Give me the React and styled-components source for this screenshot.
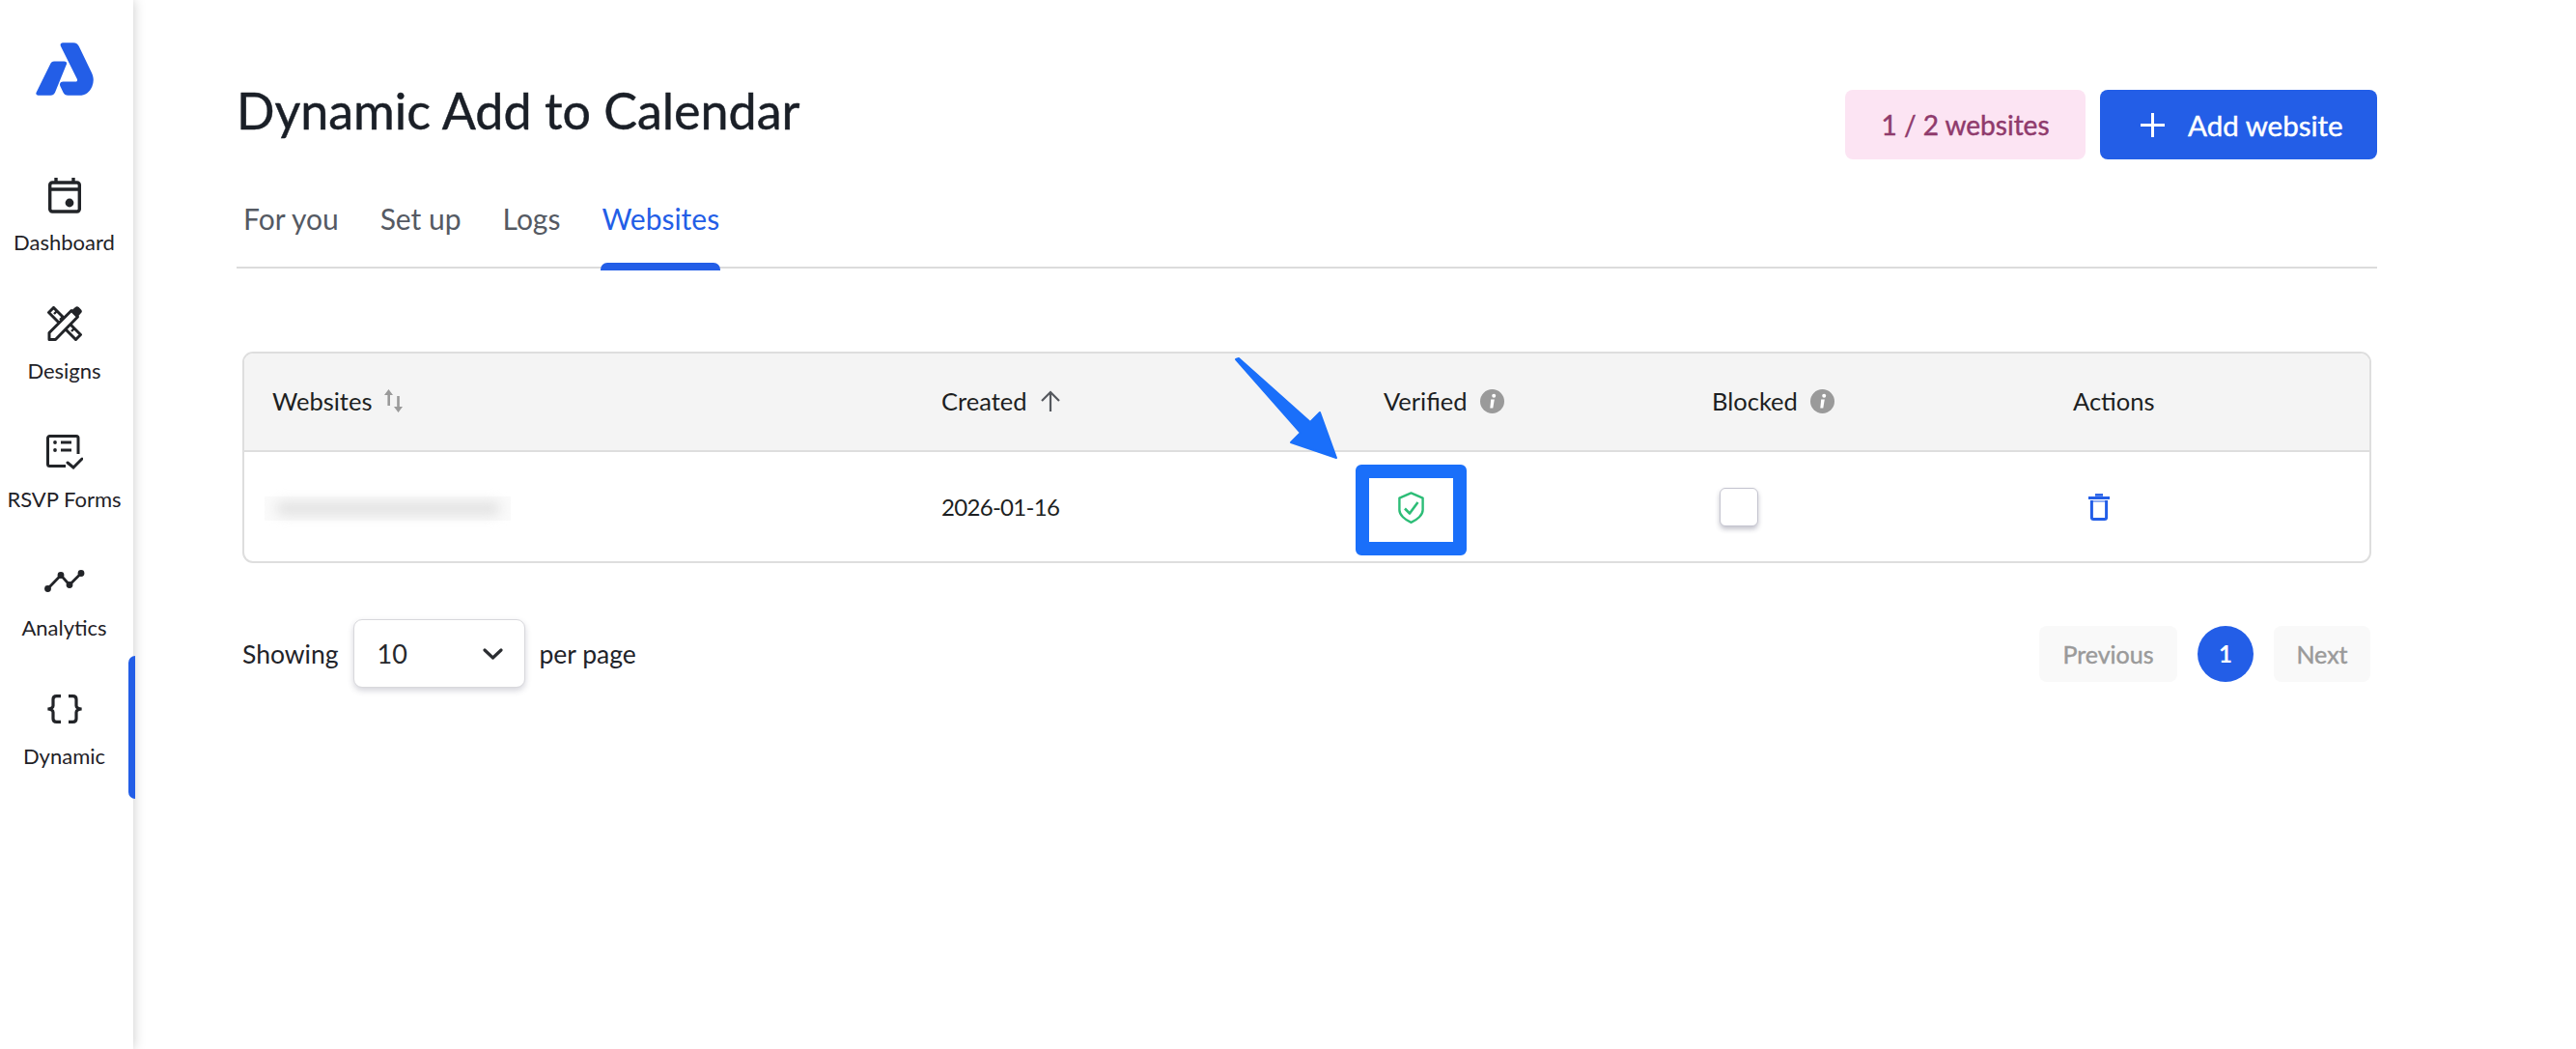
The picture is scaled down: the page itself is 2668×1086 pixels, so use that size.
import React from "react";
import styled, { createGlobalStyle } from "styled-components";

const FONT = `"Lato", "Liberation Sans", sans-serif`;
const BLUE = "#235ee7";
const MEDIUM = "-webkit-text-stroke: 0.45px currentColor;";

const Global = createGlobalStyle`
  html, body { margin: 0; padding: 0; background: #fff; }
  body { font-family: ${FONT}; color: #1c1f24; }
  * { box-sizing: border-box; }
`;

const Page = styled.div`
  display: flex;
  height: 100vh;
  overflow: hidden;
  background: #fff;
`;

const Sidebar = styled.aside`
  width: 138px;
  flex: none;
  display: flex;
  flex-direction: column;
  align-items: center;
  padding: 44px 5px 0 0;
  background: #fff;
  box-shadow: 0 0 12px rgba(0, 0, 0, 0.22);
  position: relative;
  z-index: 1;
`;

const LogoMark = styled.svg`
  display: block;
  width: 60px;
  height: 55px;
  margin-bottom: 69px;
`;

const NavList = styled.nav`
  display: flex;
  flex-direction: column;
  width: 100%;
`;

const NavItem = styled.a`
  position: relative;
  height: 133px;
  padding-top: 12px;
  display: flex;
  flex-direction: column;
  align-items: center;
  color: #1f2227;
  font-size: 22px;
  line-height: 26px;
  white-space: nowrap;
  ${(p) =>
    p.$active &&
    `&::after {
      content: "";
      position: absolute;
      right: -7px;
      top: -21px;
      width: 7px;
      height: 148px;
      background: ${BLUE};
      border-radius: 7px 0 0 7px;
    }`}
`;

const NavIconBox = styled.span`
  height: 44px;
  display: flex;
  align-items: center;
  justify-content: center;
  margin-bottom: 14px;
`;

const Main = styled.main`
  flex: 1;
  padding: 88px 206px 0 107px;
`;

const Header = styled.header`
  display: flex;
  justify-content: space-between;
  align-items: flex-start;
`;

const Title = styled.h1`
  margin: 0;
  font-size: 52px;
  line-height: 52px;
  font-weight: 400;
  color: #1a1f27;
  ${MEDIUM}
`;

const HeaderActions = styled.div`
  display: flex;
  gap: 15px;
  margin-top: 5px;
`;

const QuotaBadge = styled.div`
  width: 249px;
  height: 72px;
  display: flex;
  align-items: center;
  justify-content: center;
  background: #fce4f3;
  color: #8f3a6c;
  border-radius: 8px;
  font-size: 28px;
  ${MEDIUM}
`;

const AddButton = styled.button`
  width: 287px;
  height: 72px;
  display: flex;
  align-items: center;
  justify-content: flex-start;
  gap: 24px;
  padding: 0 0 0 42px;
  border: 0;
  background: ${BLUE};
  color: #fff;
  border-radius: 8px;
  font-family: inherit;
  font-size: 29.5px;
  ${MEDIUM}
`;

const TabBar = styled.div`
  display: flex;
  gap: 41px;
  margin-top: 44px;
  padding-left: 6px;
  border-bottom: 2px solid #dcdcdc;
  height: 69px;
`;

const Tab = styled.div`
  position: relative;
  height: 69px;
  line-height: 34px;
  font-size: 30px;
  padding: 0 1px;
  color: ${(p) => (p.$active ? BLUE : "#555a63")};
  ${(p) =>
    p.$active &&
    `&::after {
      content: "";
      position: absolute;
      left: 0;
      right: 0;
      bottom: -2px;
      height: 8px;
      background: ${BLUE};
      border-radius: 7px 7px 0 0;
    }`}
`;

const TableWrap = styled.section`
  position: relative;
  margin: 86px 6px 0 6px;
  border: 2px solid #dedede;
  border-radius: 11px;
  height: 219px;
`;

const Row = styled.div`
  display: grid;
  grid-template-columns: 722px 458px 340px 374px 1fr;
  align-items: center;
  font-size: 25.5px;
  color: #1d1f22;
`;

const HeadRow = styled(Row)`
  height: 102px;
  background: #f4f4f4;
  border-bottom: 2px solid #dedede;
  border-radius: 9px 9px 0 0;
`;

const BodyRow = styled(Row)`
  height: 113px;
`;

const HeadCell = styled.div`
  display: flex;
  align-items: center;
  gap: 13px;
  padding-left: ${(p) => p.$pl || 0}px;
  padding-bottom: 2px;
`;

const BlurredUrl = styled.div`
  margin-left: 21px;
  margin-top: 4px;
  width: 255px;
  height: 25px;
  background: #fafafa;
  display: flex;
  align-items: center;
  justify-content: center;
  &::before {
    content: "";
    width: 232px;
    height: 15px;
    background: #e4e4e4;
    border-radius: 7px;
    filter: blur(6px);
  }
`;

const DateText = styled.div`
  font-size: 24px;
  letter-spacing: -0.7px;
`;

const ShieldWrap = styled.div`
  position: relative;
  width: 27px;
  height: 33px;
  margin: 2px 0 0 15px;
`;

const Frame = styled.div`
  position: absolute;
  left: -44px;
  top: -28px;
  width: 115px;
  height: 94px;
  border: 14px solid #1a6ffa;
  border-radius: 6px;
`;

const Checkbox = styled.div`
  width: 40px;
  height: 40px;
  margin-left: 8px;
  border-radius: 6px;
  background: #fff;
  border: 1px solid #c4c4cf;
  box-shadow: 0 3px 5px rgba(60, 60, 90, 0.3);
`;

const TrashCell = styled.div`
  margin-left: 16px;
  height: 28px;
`;

const Arrow = styled.svg`
  position: absolute;
  left: 1022px;
  top: -1px;
  width: 115px;
  height: 115px;
`;

const Footer = styled.div`
  display: flex;
  justify-content: space-between;
  align-items: center;
  margin: 58px 7px 0 6px;
`;

const PerPage = styled.div`
  display: flex;
  align-items: center;
  gap: 15px;
  font-size: 26.5px;
  color: #1f2329;
`;

const SelectBox = styled.div`
  width: 178px;
  height: 71px;
  display: flex;
  align-items: center;
  justify-content: space-between;
  padding: 0 22px 0 24px;
  background: #fff;
  border: 1px solid #d8d8dc;
  border-radius: 9px;
  box-shadow: 0 3px 6px rgba(60, 60, 90, 0.22);
  font-size: 27px;
  color: #26282c;
`;

const Pager = styled.div`
  display: flex;
  align-items: center;
  gap: 21px;
`;

const PagerButton = styled.div`
  width: ${(p) => p.$w}px;
  height: 58px;
  display: flex;
  align-items: center;
  justify-content: center;
  background: #f9f9f9;
  border-radius: 8px;
  color: #9a9a9a;
  font-size: 25px;
  ${MEDIUM}
`;

const PageDot = styled.div`
  width: 58px;
  height: 58px;
  border-radius: 50%;
  display: flex;
  align-items: center;
  justify-content: center;
  background: ${BLUE};
  color: #fff;
  font-size: 24px;
  font-weight: 700;
`;

const ICON = "#222428";

const CalendarIcon = () => (
  <svg width="34" height="37" viewBox="0 0 34 37" fill="none" stroke={ICON} strokeWidth="3.4">
    <rect x="1.7" y="5" width="30.6" height="30" rx="2.5" />
    <path d="M2 12h30M8 0v5M26 0v5" />
    <circle cx="22" cy="26" r="4.4" fill={ICON} stroke="none" />
  </svg>
);

const DesignsIcon = () => (
  <svg width="36" height="36" viewBox="0 0 36 36" fill="none" stroke={ICON} strokeWidth="3">
    <path d="M6.500 1.500 1.500 6.500 29.500 34.500l5-5z" />
    <path d="M10 5l-3 3M16 11l-3 3M22 17l-3 3M28 23l-3 3" strokeWidth="2.4" />
    <path d="M2 34.500V27.500L25 4.500l6.500 6.500L8.500 34.500z" fill="#fff" strokeLinejoin="round" />
    <path d="M25 4.500l4-3.500a2.600 2.600 0 0 1 3.600 0l2.400 2.400a2.600 2.600 0 0 1 0 3.600L31.500 11z" fill={ICON} stroke="none" />
  </svg>
);

const FormsIcon = () => (
  <svg width="38" height="36" viewBox="0 0 38 36" fill="none" stroke={ICON} strokeWidth="3">
    <path d="M20 32.500H3.500a2 2 0 0 1-2-2v-27a2 2 0 0 1 2-2H31a2 2 0 0 1 2 2V20" />
    <path d="M15 8h11M15 16h11" />
    <circle cx="9" cy="8" r="1.9" fill={ICON} stroke="none" />
    <circle cx="9" cy="16" r="1.9" fill={ICON} stroke="none" />
    <path d="M22 29l6 5 9-9" strokeLinecap="round" />
  </svg>
);

const AnalyticsIcon = () => (
  <svg width="42" height="23" viewBox="0 0 42 23" fill={ICON} stroke="none">
    <path d="M3.500 19.500 17 5.500 26 15.500 38 3.500" fill="none" stroke={ICON} strokeWidth="2.8" />
    <circle cx="3.5" cy="19.5" r="3.4" />
    <circle cx="17" cy="5.5" r="3.4" />
    <circle cx="26" cy="15.5" r="3.4" />
    <circle cx="38" cy="3.5" r="3.4" />
  </svg>
);

const BracesIcon = () => (
  <svg width="38" height="30" viewBox="0 0 38 30" fill="none" stroke={ICON} strokeWidth="3.2">
    <path d="M15 1.600h-4.500Q7 1.600 7 5v6.500Q7 14.500 1.500 15 7 15.500 7 18.500V25q0 3.400 3.500 3.400H15" />
    <path d="M23 1.600h4.500Q31 1.600 31 5v6.500q0 3 5.500 3.500-5.500.5-5.500 3.500V25q0 3.400-3.500 3.400H23" />
  </svg>
);

const SortIcon = () => (
  <svg width="19" height="24" viewBox="0 0 19 24" fill="#9a9a9a" stroke="none">
    <path d="M4.500 0 9 6H6v11H3.400V6H0z" />
    <path d="M14.500 24 19 18h-3.200V7h-2.600v11H10z" />
  </svg>
);

const ArrowUpIcon = () => (
  <svg width="22" height="22" viewBox="0 0 22 22" fill="none" stroke="#55585e" strokeWidth="2.2">
    <path d="M11 22V2M2 11l9-9 9 9" />
  </svg>
);

const InfoIcon = () => (
  <svg width="25" height="25" viewBox="0 0 25 25">
    <circle cx="12.5" cy="12.5" r="12.5" fill="#9a9a9a" />
    <path d="M11.200 10.500h3.600l-1.500 9h-3z" fill="#fff" />
    <circle cx="14.2" cy="6.8" r="2" fill="#fff" />
  </svg>
);

const ShieldIcon = () => (
  <svg width="27" height="33" viewBox="0 0 27 33" fill="none" stroke="#2dbd77" strokeWidth="2.4" strokeLinejoin="round">
    <path d="M13.500 1.400 25.600 6.600V19c0 5-5.500 10-12.100 12.800C6.900 29 1.400 24 1.400 19V6.600z" />
    <path d="M7 17.500l5 5L20.500 11" strokeWidth="2.6" />
  </svg>
);

const TrashIcon = () => (
  <svg width="22" height="28" viewBox="0 0 22 28" fill="none" stroke={BLUE} strokeWidth="3">
    <path d="M0 4.500h22" />
    <path d="M7 1.400h8" strokeWidth="2.6" />
    <path d="M3.400 7v17.500a2 2 0 0 0 2 2h11.200a2 2 0 0 0 2-2V7" />
    <path d="M3 8h16" strokeWidth="1" />
  </svg>
);

const PlusIcon = () => (
  <svg width="25" height="25" viewBox="0 0 25 25" stroke="#fff" strokeWidth="3" fill="none">
    <path d="M12.500 0v25M0 12.500h25" />
  </svg>
);

const Chevron = () => (
  <svg width="21" height="12" viewBox="0 0 21 12" fill="none" stroke="#2b2d31" strokeWidth="3.2" strokeLinecap="round" strokeLinejoin="round">
    <path d="M2 2l8.500 8L19 2" />
  </svg>
);

const NAV = [
  { label: "Dashboard", icon: <CalendarIcon /> },
  { label: "Designs", icon: <DesignsIcon /> },
  { label: "RSVP Forms", icon: <FormsIcon /> },
  { label: "Analytics", icon: <AnalyticsIcon /> },
  { label: "Dynamic", icon: <BracesIcon />, active: true },
];

const TABS = ["For you", "Set up", "Logs", "Websites"];

export default function App() {
  return (
    <Page>
      <Global />
      <Sidebar>
        <LogoMark viewBox="0 0 60 55" fill={BLUE}>
          <path d="M19 19.500h10.500c2.200 0 3.200 1.700 2.200 3.600L20 51.700c-1 1.900-2.400 3-4.500 3H2.600c-1.800 0-2.800-1.300-2-3L15.500 21.600c.8-1.400 2-2.100 3.500-2.100z" />
          <path d="M28 .2h11c3 0 4.600 1.400 5.800 3.700l13 27c2.400 5 2.600 9.400.6 14.500-2.400 6-7 9.300-13.400 9.300H33.500c-2.500 0-4-1.200-5-3l-3-6.200c-1.300-2.700 0-5 3-5h12.500c1.700 0 2.500-1 1.800-2.700L26 4c-1-2 0-3.800 2-3.800z" />
        </LogoMark>
        <NavList>
          {NAV.map((n) => (
            <NavItem key={n.label} $active={n.active}>
              <NavIconBox>{n.icon}</NavIconBox>
              {n.label}
            </NavItem>
          ))}
        </NavList>
      </Sidebar>
      <Main>
        <Header>
          <Title>Dynamic Add to Calendar</Title>
          <HeaderActions>
            <QuotaBadge>1 / 2 websites</QuotaBadge>
            <AddButton>
              <PlusIcon />
              Add website
            </AddButton>
          </HeaderActions>
        </Header>
        <TabBar>
          {TABS.map((t) => (
            <Tab key={t} $active={t === "Websites"}>
              {t}
            </Tab>
          ))}
        </TabBar>
        <TableWrap>
          <HeadRow>
            <HeadCell $pl={29}>
              Websites
              <SortIcon />
            </HeadCell>
            <HeadCell>
              Created
              <ArrowUpIcon />
            </HeadCell>
            <HeadCell>
              Verified
              <InfoIcon />
            </HeadCell>
            <HeadCell>
              Blocked
              <InfoIcon />
            </HeadCell>
            <HeadCell>Actions</HeadCell>
          </HeadRow>
          <BodyRow>
            <BlurredUrl />
            <DateText>2026-01-16</DateText>
            <ShieldWrap>
              <ShieldIcon />
              <Frame />
            </ShieldWrap>
            <Checkbox />
            <TrashCell>
              <TrashIcon />
            </TrashCell>
          </BodyRow>
          <Arrow viewBox="0 0 115 115" fill="#1a6ffa" stroke="#1a6ffa" strokeWidth="2" strokeLinejoin="round">
            <path d="M5 7 8 6 82 72 92 62 109 109 62 93 72 83z" />
          </Arrow>
        </TableWrap>
        <Footer>
          <PerPage>
            Showing
            <SelectBox>
              10
              <Chevron />
            </SelectBox>
            per page
          </PerPage>
          <Pager>
            <PagerButton $w={143}>Previous</PagerButton>
            <PageDot>1</PageDot>
            <PagerButton $w={100}>Next</PagerButton>
          </Pager>
        </Footer>
      </Main>
    </Page>
  );
}
